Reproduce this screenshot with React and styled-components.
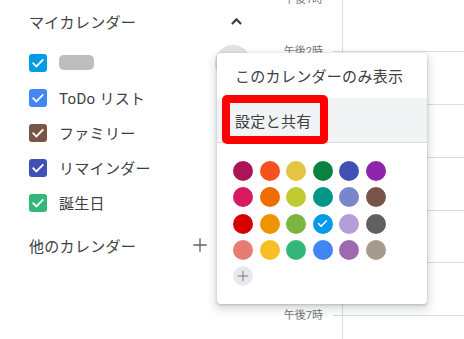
import React from 'react';
import styled, { createGlobalStyle } from 'styled-components';

const GlobalStyle = createGlobalStyle`
  html, body {
    margin: 0;
    padding: 0;
    background: #fff;
  }
  body {
    font-family: Roboto, "Noto Sans CJK JP", "Noto Sans", sans-serif;
    color: #3c4043;
  }
`;

const HOUR = 52.75;

const MY_CALENDARS = [
  { id: 'me', color: '#039be5', placeholder: true, menu: true },
  { id: 'todo', color: '#4285f4', label: 'ToDo リスト' },
  { id: 'family', color: '#795548', label: 'ファミリー' },
  { id: 'reminder', color: '#3f51b5', label: 'リマインダー' },
  { id: 'birthday', color: '#33b679', label: '誕生日' },
];

const HOURS = ['午後1時', '午後2時', '午後3時', '午後4時', '午後5時', '午後6時', '午後7時'];

const PALETTE = [
  ['#ad1457', '#f4511e', '#e4c441', '#0b8043', '#3f51b5', '#8e24aa'],
  ['#d81b60', '#ef6c00', '#c0ca33', '#009688', '#7986cb', '#795548'],
  ['#d50000', '#f09300', '#7cb342', '#039be5', '#b39ddb', '#616161'],
  ['#e67c73', '#f6bf26', '#33b679', '#4285f4', '#9e69af', '#a79b8e'],
];

const Page = styled.div`
  position: relative;
  display: flex;
  width: 464px;
  height: 339px;
  overflow: hidden;
`;

const Sidebar = styled.aside`
  width: 256px;
  flex-shrink: 0;
  padding: 0 8px 0 29px;
  box-sizing: border-box;
`;

const SectionHeader = styled.div`
  display: flex;
  align-items: center;
  height: 42px;
  margin-top: ${(p) => p.$gap || 0}px;
`;

const SectionTitle = styled.span`
  flex: 1;
  font-size: 15px;
  letter-spacing: 0.3px;
  color: #3c4043;
`;

const IconBox = styled.span`
  width: 24px;
  height: 24px;
  display: flex;
  align-items: center;
  justify-content: center;
  color: ${(p) => p.$color || '#3c4043'};
`;

const HeaderIcons = styled.div`
  display: flex;
  gap: 12px;
`;

const CalendarList = styled.ul`
  list-style: none;
  margin: 0;
  padding: 3px 0 0;
`;

const CalendarItem = styled.li`
  display: flex;
  align-items: center;
  height: 35px;
  gap: 12px;
`;

const Checkbox = styled.span`
  width: 18px;
  height: 18px;
  border-radius: 3px;
  background: ${(p) => p.$color};
  display: flex;
  align-items: center;
  justify-content: center;
  flex-shrink: 0;
`;

const ItemLabel = styled.span`
  font-size: 15px;
  letter-spacing: 0.3px;
  color: #3c4043;
`;

const Redacted = styled.span`
  width: 35px;
  height: 15px;
  border-radius: 5px;
  background: #bdbdbd;
`;

const OptionsButton = styled.span`
  margin-left: auto;
  margin-right: -3px;
  width: 36px;
  height: 36px;
  border-radius: 50%;
  background: #e3e3e3;
`;

const TimeGrid = styled.div`
  flex: 1;
  margin-top: ${-HOUR / 2 - 0.8}px;
`;

const HourRow = styled.div`
  display: grid;
  grid-template-columns: 77px 9px 1fr;
  height: ${HOUR}px;
`;

const HourLabel = styled.span`
  align-self: center;
  text-align: right;
  padding-right: 10px;
  font-size: 11px;
  color: #70757a;
  line-height: 1;
`;

const Tick = styled.span`
  align-self: center;
  height: 1px;
  background: #dadce0;
`;

const Slot = styled.div`
  border-left: 1px solid #dadce0;
  background: linear-gradient(#dadce0, #dadce0) left center / 100% 1px no-repeat;
`;

const Menu = styled.div`
  position: absolute;
  left: 217px;
  top: 53px;
  width: 210px;
  background: #fff;
  border-radius: 4px;
  box-shadow: 0 4px 8px 3px rgba(60, 64, 67, 0.15), 0 1px 3px rgba(60, 64, 67, 0.3);
  z-index: 2;
`;

const MenuItem = styled.div`
  position: relative;
  display: flex;
  align-items: center;
  height: ${(p) => (p.$active ? 44 : 45)}px;
  padding-left: 18px;
  font-size: 15px;
  letter-spacing: 0.3px;
  color: #3c4043;
  background: ${(p) => (p.$active ? '#f1f3f4' : 'transparent')};
  border-bottom: ${(p) => (p.$active ? '1px solid #dadce0' : 'none')};
`;

const Highlight = styled.span`
  position: absolute;
  left: 5px;
  top: -3px;
  width: 106px;
  height: 49px;
  box-sizing: border-box;
  border: 8px solid #ff0000;
  border-radius: 5px;
`;

const Palette = styled.div`
  display: grid;
  grid-template-columns: repeat(6, 20px);
  column-gap: 6.6px;
  row-gap: 6.25px;
  padding: 18px 16px;
`;

const Swatch = styled.span`
  width: 20px;
  height: 20px;
  border-radius: 50%;
  background: ${(p) => p.$color};
  display: flex;
  align-items: center;
  justify-content: center;
`;

const AddSwatch = styled(Swatch)`
  background: #e8e9ec;
  color: #70757a;
`;

const Check = ({ size = 16 }) => (
  <svg width={size} height={size} viewBox="0 0 24 24" fill="none">
    <path d="M5 12.5l4.5 4.5L19 7.5" stroke="#fff" strokeWidth="2.8" strokeLinecap="square" />
  </svg>
);

const ChevronUp = () => (
  <svg width="17" height="17" viewBox="0 0 24 24" fill="none">
    <path d="M5.5 15.5l6.5-6.5 6.5 6.5" stroke="currentColor" strokeWidth="3" />
  </svg>
);

const Plus = ({ size = 18, width = 1.8 }) => (
  <svg width={size} height={size} viewBox="0 0 24 24" fill="none">
    <path d="M12 3v18M3 12h18" stroke="currentColor" strokeWidth={width} />
  </svg>
);

const App = () => (
  <>
    <GlobalStyle />
    <Page>
      <Sidebar>
        <SectionHeader>
          <SectionTitle>マイカレンダー</SectionTitle>
          <IconBox><ChevronUp /></IconBox>
        </SectionHeader>
        <CalendarList>
          {MY_CALENDARS.map((cal) => (
            <CalendarItem key={cal.id}>
              <Checkbox $color={cal.color}><Check /></Checkbox>
              {cal.placeholder ? <Redacted /> : <ItemLabel>{cal.label}</ItemLabel>}
              {cal.menu && <OptionsButton />}
            </CalendarItem>
          ))}
        </CalendarList>
        <SectionHeader $gap={4}>
          <SectionTitle>他のカレンダー</SectionTitle>
          <HeaderIcons>
            <IconBox $color="#5f6368"><Plus /></IconBox>
            <IconBox><ChevronUp /></IconBox>
          </HeaderIcons>
        </SectionHeader>
      </Sidebar>
      <TimeGrid>
        {HOURS.map((h) => (
          <HourRow key={h}>
            <HourLabel>{h}</HourLabel>
            <Tick />
            <Slot />
          </HourRow>
        ))}
      </TimeGrid>
      <Menu>
        <MenuItem>このカレンダーのみ表示</MenuItem>
        <MenuItem $active>
          設定と共有
          <Highlight />
        </MenuItem>
        <Palette>
          {PALETTE.flat().map((c, i) => (
            <Swatch key={i} $color={c}>{i === 15 && <Check size={13} />}</Swatch>
          ))}
          <AddSwatch><Plus size={14} width={1.6} /></AddSwatch>
        </Palette>
      </Menu>
    </Page>
  </>
);

export default App;
